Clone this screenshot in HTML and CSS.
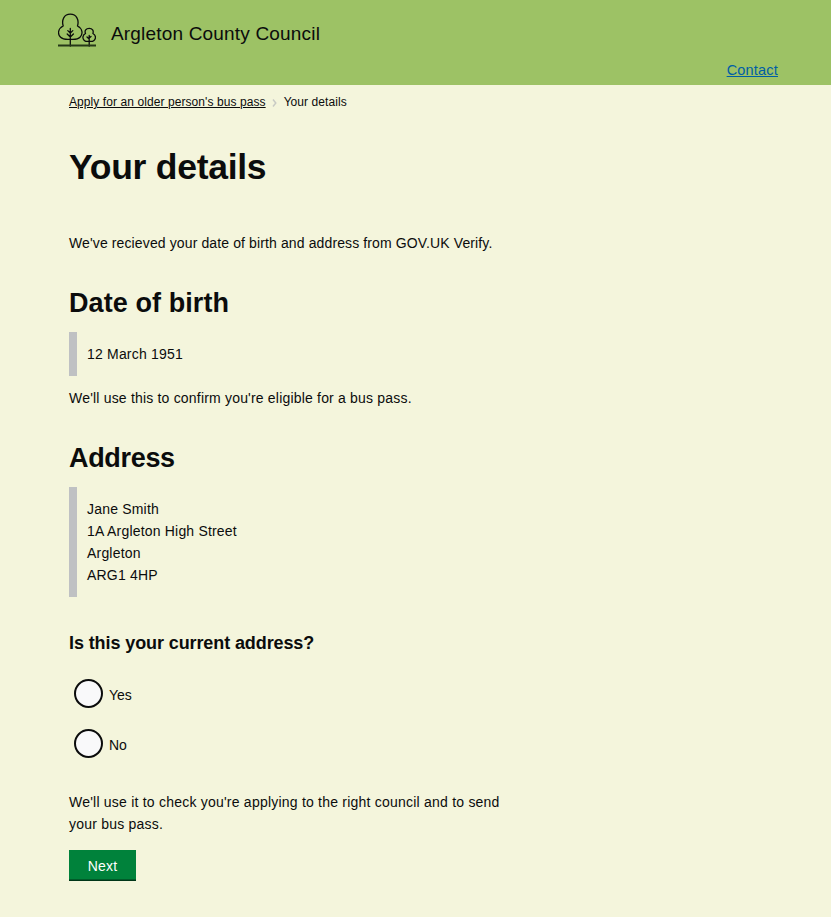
FILE: index.html
```html
<!DOCTYPE html>
<html lang="en">
<head>
<meta charset="utf-8">
<title>Your details - Argleton County Council</title>
<link rel="stylesheet" href="styles.css">
</head>
<body>
<header class="site-header">
  <div class="brand">
    <svg class="logo" width="38" height="34" viewBox="0 0 38 34" fill="none" stroke="#0b0c0c" stroke-width="1.3" stroke-linecap="round" stroke-linejoin="round">
      <path d="M5.200 13C3.400 7 6 1.200 12.300 1.200S21.300 7 19.500 13C24.500 15.500 25.300 21 22 24.200C19.300 27 15.500 26.300 12.300 26.300S5.500 27 2.600 24.200C-.8 21 0 15.500 5.200 13Z"/>
      <path d="M12.300 33V15.500M12.300 20L9.800 17.600M12.300 20L14.800 17.600M12.300 24L9.200 21M12.300 24L15.400 21"/>
      <path d="M27.500 20.500C26.300 17.500 28 15.300 31.200 15.300S35.900 17.500 34.900 20.500C38 22 38.200 25.500 36 27.400C34.400 28.800 32.700 28.400 31.200 28.400S27.800 28.800 26.300 27.400C24.200 25.500 24.400 22 27.500 20.500Z"/>
      <path d="M31.200 33V22.500M31.200 26L29 24M31.200 25L33 23.400"/>
      <path d="M0 32.500H38" stroke="#263818" stroke-width="2" stroke-linecap="butt"/>
    </svg>
    <span class="council">Argleton County Council</span>
  </div>
  <a class="contact" href="#">Contact</a>
</header>
<main class="page">
  <nav class="breadcrumbs">
    <a href="#">Apply for an older person's bus pass</a>
    <svg width="5" height="8" viewBox="0 0 5 8" fill="none" stroke="#c8cac4" stroke-width="1.500"><path d="M1 .5L3.800 4L1 7.500"/></svg>
    <span>Your details</span>
  </nav>
  <h1>Your details</h1>
  <p class="intro">We've recieved your date of birth and address from GOV.UK Verify.</p>
  <h2>Date of birth</h2>
  <div class="inset">12 March 1951</div>
  <p class="use">We'll use this to confirm you're eligible for a bus pass.</p>
  <h2 class="address">Address</h2>
  <div class="inset">Jane Smith<br>1A Argleton High Street<br>Argleton<br>ARG1 4HP</div>
  <form>
    <h3>Is this your current address?</h3>
    <label class="choice"><input type="radio" name="current"><span>Yes</span></label>
    <label class="choice"><input type="radio" name="current"><span>No</span></label>
    <p class="check">We'll use it to check you're applying to the right council and to send your bus pass.</p>
    <button type="button">Next</button>
  </form>
</main>
</body>
</html>
```
FILE: styles.css
```css
* { box-sizing: border-box; }
body {
  margin: 0;
  min-height: 917px;
  background: #f4f5dc;
  color: #0b0c0c;
  font: 14px/22px "Liberation Sans", Arial, sans-serif;
}
.site-header {
  height: 85px;
  padding: 13px 53px 0 58px;
  background: #9dc265;
  display: flex;
  flex-direction: column;
}
.brand { display: flex; gap: 15px; height: 46px; }
.logo { display: block; flex: none; }
.council { font-size: 19px; line-height: 42px; letter-spacing: .18px; }
.contact { align-self: flex-end; color: #005ea5; font-size: 14.500px; letter-spacing: .2px; }
.page { width: 525px; padding: 0 12px 0 69px; }
.breadcrumbs {
  display: flex;
  align-items: center;
  gap: 6.500px;
  height: 34px;
  font-size: 12px;
  letter-spacing: .08px;
  white-space: nowrap;
}
.breadcrumbs svg { margin-top: 2px; }
.breadcrumbs a { color: inherit; }
h1, h2, h3, p { margin: 0; }
h1 { margin-top: 29px; font-size: 35.500px; line-height: 38px; letter-spacing: -.27px; white-space: nowrap; }
h2 { margin-top: 32px; margin-bottom: 12px; font-size: 27px; line-height: 34px; letter-spacing: .08px; white-space: nowrap; }
.address { letter-spacing: -.32px; }
h3 { margin-top: 35px; margin-bottom: 24px; font-size: 18px; line-height: 23px; letter-spacing: -.1px; white-space: nowrap; }
p, .inset { letter-spacing: .19px; }
.intro { margin-top: 46px; letter-spacing: .12px; white-space: nowrap; }
.inset { padding: 11px 0 11px 10px; border-left: 8px solid #bfc1c3; }
.use { margin-top: 11px; }
.choice { display: flex; align-items: center; gap: 6px; height: 29px; margin: 0 0 21px 5px; }
.choice input {
  appearance: none;
  width: 29px;
  height: 29px;
  margin: 0;
  border: 2px solid #0b0c0c;
  border-radius: 50%;
  background: #f9f9fa;
}
.choice span { margin-top: 3px; }
.check { margin-top: 33px; letter-spacing: .22px; }
button {
  display: block;
  width: 67px;
  height: 31px;
  margin-top: 15px;
  padding: 0;
  border: 0;
  background: #00823b;
  box-shadow: inset 0 -1.500px #003618;
  color: #fff;
  font: inherit;
  letter-spacing: .2px;
}
```
